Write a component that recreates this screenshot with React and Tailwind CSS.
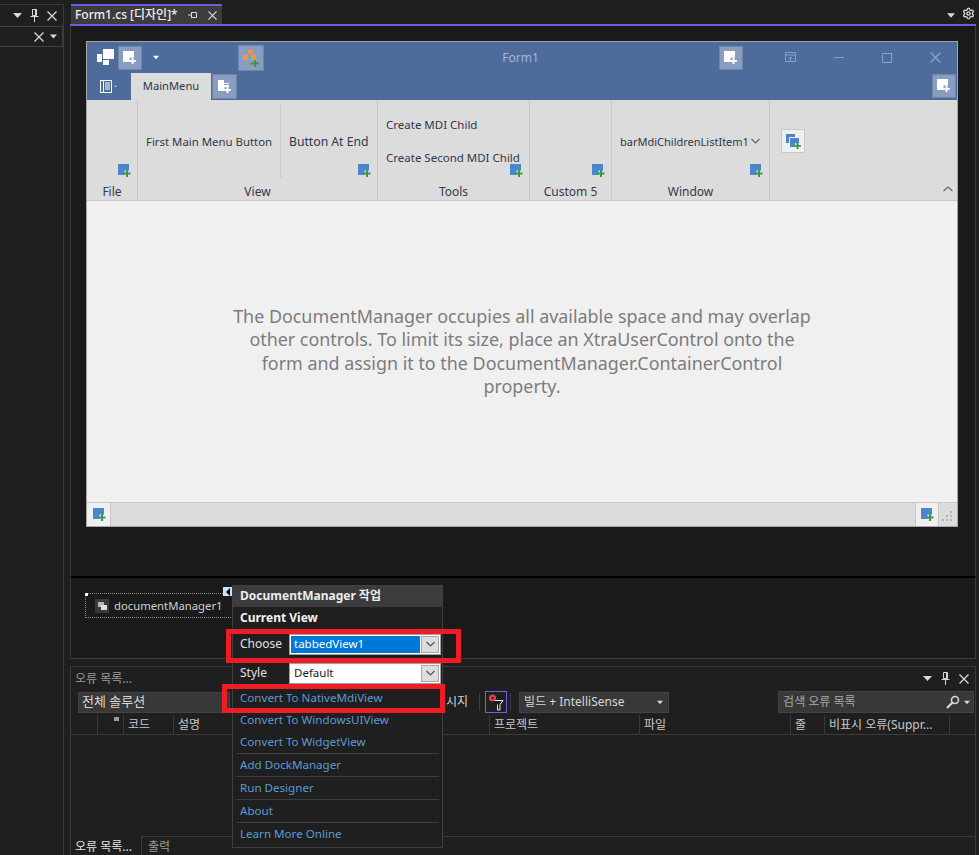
import React from "react";
import { Settings } from "lucide-react";

const ui = { fontFamily: '"Noto Sans", "Noto Sans CJK KR", sans-serif' };

function Arrow({ className = "" }) {
  return (
    <svg width="9" height="5" viewBox="0 0 9 5" className={className}>
      <path d="M0 0h9L4.500 5z" fill="currentColor" />
    </svg>
  );
}

function Pin({ className = "" }) {
  return (
    <svg width="9" height="13" viewBox="0 0 9 13" className={className} fill="none" stroke="currentColor">
      <path d="M2.500.500h4v6h-4zM.500 7.500h8M4.500 7.500V13M5.500 1v5" />
    </svg>
  );
}

function Close({ size = 10, className = "" }) {
  return (
    <svg width={size} height={size} viewBox="0 0 10 10" className={className} fill="none" stroke="currentColor" strokeWidth="1.300">
      <path d="M.500.500l9 9M9.500.500l-9 9" />
    </svg>
  );
}

function AddBlue() {
  return (
    <svg width="13" height="13" viewBox="0 0 13 13" className="block">
      <path d="M0 0h11v6.500H6.500V11H0z" fill="#4a86c8" />
      <path d="M8 6h2v2.500h2.500v2H10V13H8v-2.500H5.500v-2H8z" fill="#339a4c" />
    </svg>
  );
}

function AddWhiteButton({ size = 24, tabs = false }) {
  return (
    <div
      className="flex items-center justify-center bg-[#8a9dc0] border border-[#7186ad]"
      style={{ width: size, height: size }}
    >
      <svg width="14" height="14" viewBox="0 0 14 14">
        {tabs ? (
          <path d="M0 0h6v3h5v1H6v1h5v2H6.500v4H0z" fill="#fff" />
        ) : (
          <path d="M0 0h11v6.500H6.500V11H0z" fill="#fff" />
        )}
        <path d="M8.500 6.500h2V9H13v1.800h-2.500V13h-2v-2.200H6V9h2.500z" fill="#fff" />
      </svg>
    </div>
  );
}

function GroupLabel({ children }) {
  return <div className="h-[19px] pt-[2px] text-center leading-[18px] text-[#333a48]">{children}</div>;
}

function Chevron({ dark = false }) {
  return (
    <svg width="9" height="6" viewBox="0 0 9 6" fill="none" stroke={dark ? "#555" : "#666"} strokeWidth="1.200">
      <path d="M.500 1l4 4 4-4" />
    </svg>
  );
}

function Ribbon() {
  return (
    <div className="flex h-[101px] bg-[#dcdcdc] border-b border-[#c8c8c8] text-[12px] text-[#30384a]">
      <div className="w-[51px] flex flex-col border-r border-[#c8c8c8]">
        <div className="h-[81px] flex items-end justify-end pr-[6px] pb-[4px]">
          <AddBlue />
        </div>
        <GroupLabel>File</GroupLabel>
      </div>

      <div className="w-[240px] flex flex-col border-r border-[#c8c8c8]">
        <div className="h-[81px] flex pt-[4px]">
          <div className="w-[143px] h-[74px] flex items-center pl-[8px] pt-[1px] border-r border-[#c8c8c8] whitespace-nowrap text-[11.400px]">
            First Main Menu Button
          </div>
          <div className="flex-1 relative pl-[8px] pt-[28px] whitespace-nowrap leading-[20px] text-[12.200px]">
            Button At End
            <div className="absolute right-[6px] bottom-[4px]">
              <AddBlue />
            </div>
          </div>
        </div>
        <GroupLabel>View</GroupLabel>
      </div>

      <div className="w-[152px] flex flex-col border-r border-[#c8c8c8]">
        <div className="h-[81px] relative pl-[8px] pt-[15px] leading-[20px] whitespace-nowrap text-[11.500px]">
          <div className="mb-[13px]">Create MDI Child</div>
          <div>Create Second MDI Child</div>
          <div className="absolute right-[6px] bottom-[4px]">
            <AddBlue />
          </div>
        </div>
        <GroupLabel>Tools</GroupLabel>
      </div>

      <div className="w-[82px] flex flex-col border-r border-[#c8c8c8]">
        <div className="h-[81px] flex items-end justify-end pr-[6px] pb-[4px]">
          <AddBlue />
        </div>
        <GroupLabel>Custom 5</GroupLabel>
      </div>

      <div className="w-[158px] flex flex-col border-r border-[#c8c8c8]">
        <div className="h-[81px] relative pl-[8px] pt-[32px] leading-[20px] whitespace-nowrap flex items-start gap-[3px] text-[11px]">
          <span className="w-[128px]">barMdiChildrenListItem1</span>
          <div className="pt-[6px]">
            <Chevron />
          </div>
          <div className="absolute right-[6px] bottom-[4px]">
            <AddBlue />
          </div>
        </div>
        <GroupLabel>Window</GroupLabel>
      </div>

      <div className="flex-1 relative pl-[11px] pt-[29px]">
        <div className="w-[24px] h-[24px] bg-[#efefef] border border-[#c8c8c8] flex items-center justify-center">
          <svg width="15" height="15" viewBox="0 0 15 15">
            <path d="M0 0h9v3H3v6H0z" fill="#4a86c8" />
            <path d="M4 4h9v5H9v4H4z" fill="#4a86c8" />
            <path d="M10.500 8.500h2V11H15v1.800h-2.500V15h-2v-2.200H8V11h2.500z" fill="#339a4c" />
          </svg>
        </div>
        <svg width="10" height="6" viewBox="0 0 10 6" fill="none" stroke="#666" strokeWidth="1.200" className="absolute right-[4px] bottom-[8px]">
          <path d="M.500 5L5 1l4.500 4" />
        </svg>
      </div>
    </div>
  );
}

function TitleBar() {
  return (
    <div className="h-[58px] bg-[#4e6c9b] flex flex-col text-[12px]">
      <div className="h-[31px] flex items-center">
        <svg width="17" height="17" viewBox="0 0 17 17" className="ml-[10px] mr-[4px]">
          <path d="M6 0h11v10H6zM0 5h5v8H0zM6 11h6v5H6z" fill="#fff" />
        </svg>
        <AddWhiteButton />
        <Arrow className="ml-[11px] w-[6px] text-white" />
        <div className="ml-[79px] w-[26px] h-[26px] bg-[#8a9dc0] border border-[#7186ad] flex items-center justify-center">
          <svg width="18" height="18" viewBox="0 0 18 18">
            <path d="M6 1h5v4H6zM1 6h5v5H1zM9 6h5v5H9z" fill="#ee9a3c" />
            <path d="M12 11h2v2.500h3v2h-3V18h-2v-2.500H9v-2h3z" fill="#339a4c" />
          </svg>
        </div>
        <div className="flex-1 text-center pl-[58px] text-[#a4b6d6]">Form1</div>
        <AddWhiteButton />
        <div className="w-[214px] shrink-0 pl-[24px] flex items-center text-[#8ba0c6]">
          <div className="w-[48px] shrink-0 flex justify-center">
            <svg width="12" height="11" viewBox="0 0 12 11" fill="none" stroke="currentColor">
              <path d="M.500.500h10v9H.500zM.500 3h10M5.500 9V5M3.500 7l2-2 2 2" />
            </svg>
          </div>
          <div className="w-[48px] shrink-0 flex justify-center">
            <div className="w-[10px] h-[1px] bg-current" />
          </div>
          <div className="w-[48px] shrink-0 flex justify-center">
            <div className="w-[10px] h-[10px] border border-current" />
          </div>
          <div className="w-[48px] shrink-0 flex justify-center">
            <Close size={11} />
          </div>
        </div>
      </div>
      <div className="h-[27px] flex items-end">
        <div className="w-[44px] h-[27px] pl-[13px] flex items-center gap-[2px] text-white">
          <svg width="12" height="13" viewBox="0 0 12 13" fill="none" stroke="currentColor">
            <path d="M.500.500h11v12H.500zM3.500.500v12M5 3h5M5 5h5M5 7h5M5 9h5" />
          </svg>
          <Arrow className="w-[3px] text-[#d0d8e8]" />
        </div>
        <div className="w-[80px] h-[27px] bg-[#dcdcdc] text-[#2f3644] flex items-center justify-center text-[11.200px]">MainMenu</div>
        <div className="ml-[1px] mb-[1px]">
          <AddWhiteButton size={25} tabs />
        </div>
        <div className="flex-1" />
        <div className="mr-[1px] mb-[2px]">
          <AddWhiteButton />
        </div>
      </div>
    </div>
  );
}

function FormDesigner() {
  return (
    <div className="ml-[15px] mt-[15px] w-[872px] h-[486px] border border-[#a6a6a6] flex flex-col">
      <TitleBar />
      <Ribbon />
      <div className="flex-1 bg-[#f0f0f0] flex items-center justify-center">
        <p className="w-[584px] text-center text-[17.900px] leading-[23.300px] text-[#7c7c7c]">
          The DocumentManager occupies all available space and may overlap other controls. To limit its size, place an XtraUserControl onto the form and assign it to the DocumentManager.ContainerControl property.
        </p>
      </div>
      <div className="h-[24px] bg-[#dcdcdc] border-t border-[#c8c8c8] flex items-center justify-between">
        <div className="w-[24px] h-[23px] bg-[#efefef] border-r border-[#c8c8c8] flex items-center justify-center pl-[2px]">
          <AddBlue />
        </div>
        <div className="flex items-center">
          <div className="w-[24px] h-[23px] bg-[#efefef] border-x border-[#c8c8c8] flex items-center justify-center">
            <AddBlue />
          </div>
          <svg width="12" height="12" viewBox="0 0 12 12" className="mx-[3px]">
            <path d="M8 2h2v2H8zM4 6h2v2H4zM8 6h2v2H8zM0 10h2v2H0zM4 10h2v2H4zM8 10h2v2H8z" fill="#b5b5b5" />
          </svg>
        </div>
      </div>
    </div>
  );
}

function ErrorList() {
  const cols = [
    { w: 27, label: "" },
    { w: 26, label: "" },
    { w: 50, label: "코드" },
    { w: 316, label: "설명" },
    { w: 150, label: "프로젝트" },
    { w: 151, label: "파일" },
    { w: 34, label: "줄" },
    { w: 125, label: "비표시 오류(Suppr..." },
  ];
  return (
    <div className="mt-[7px] h-[189px] border-t border-l border-r border-[#3a3a3a] flex flex-col text-[12px] text-[#d6d6d6]">
      <div className="h-[23px] flex items-center justify-between pl-[4px] pr-[6px] text-[#9a9a9a]">
        <span>오류 목록...</span>
        <div className="flex items-center gap-[9px] text-[#d8d8d8]">
          <Arrow />
          <Pin />
          <Close />
        </div>
      </div>
      <div className="h-[24px] flex items-center pl-[7px] relative">
        <div className="w-[152px] h-[21px] bg-[#383838] border border-[#434343] flex items-center pl-[3px] text-[13px]">전체 솔루션</div>
        <span className="ml-[216px]">시지</span>
        <div className="ml-[11px] w-px h-[18px] bg-[#3f3f3f]" />
        <div className="ml-[5px] w-[22px] h-[22px] border border-[#7160e8] flex items-center justify-center">
          <svg width="18" height="18" viewBox="0 0 18 18" fill="none">
            <circle cx="5.500" cy="5" r="3.500" fill="#e8404c" />
            <circle cx="5.500" cy="5" r="1.200" fill="#222" />
            <path d="M8 7.500h8l-3 4v5.500h-2.500v-5.500" stroke="#e8e8e8" />
          </svg>
        </div>
        <div className="ml-[3px] w-px h-[18px] bg-[#3f3f3f]" />
        <div className="ml-[8px] w-[150px] h-[21px] bg-[#383838] border border-[#434343] flex items-center justify-between pl-[4px] pr-[5px]">
          <span>빌드 + IntelliSense</span>
          <Arrow className="w-[6px]" />
        </div>
        <div className="ml-[109px] w-[196px] h-[22px] bg-[#383838] border border-[#434343] flex items-center justify-between pl-[4px] pr-[3px]">
          <span className="text-[#a8a8a8]">검색 오류 목록</span>
          <div className="flex items-center gap-[4px] text-[#d8d8d8]">
            <svg width="14" height="14" viewBox="0 0 14 14" fill="none" stroke="currentColor" strokeWidth="1.600">
              <circle cx="9" cy="5" r="3.500" />
              <path d="M6.500 7.500L1 13" strokeWidth="2.200" />
            </svg>
            <Arrow className="w-[6px]" />
          </div>
        </div>
      </div>
      <div className="mt-[1px] h-[20px] flex border-b border-[#3a3a3a] text-[#c8c8c8]">
        {cols.map((c, i) => (
          <div key={i} className="h-full border-r border-[#3a3a3a] pl-[4px] leading-[20px] whitespace-nowrap overflow-hidden relative" style={{ width: c.w }}>
            {c.label}
            {i === 1 ? <div className="absolute right-[4px] top-[2px] w-[5px] h-[4px] bg-[#9a9a9a]" /> : null}
          </div>
        ))}
      </div>
      <div className="flex-1" />
      <div className="h-[19px] flex">
        <div className="w-[71px] pl-[4px] text-[#e4e4e4] leading-[21px] border-r border-[#3a3a3a]">오류 목록...</div>
        <div className="flex-1 border-t border-[#3a3a3a] pl-[6px] text-[#9a9a9a] leading-[20px]">출력</div>
      </div>
    </div>
  );
}

function DropField({ top, children, selected = false }) {
  return (
    <div className={`flex items-center h-[20px] ${top}`}>
      <span className="w-[56px] shrink-0 pl-[7px] text-[#e0e0e0]">{children[0]}</span>
      <div className="w-[152px] shrink-0 h-[21px] bg-white border border-[#a0a0a0] flex items-center p-[1px] text-[#1a1a1a] text-[11.500px]">
        <div className={`flex-1 h-full pl-[3px] leading-[15px] ${selected ? "bg-[#0078d7] text-white" : ""}`}>{children[1]}</div>
        <div className="w-[18px] h-full ml-[1px] bg-[#dddddd] border border-[#a8a8a8] flex items-center justify-center">
          <Chevron dark />
        </div>
      </div>
    </div>
  );
}

function ActionPanel() {
  const link = "pl-[7px] h-[22px] leading-[22px] text-[#5b9bd5] text-[11.600px]";
  const sep = "mx-[3px] border-t border-[#3f3f3f]";
  return (
    <div className="absolute left-[232px] top-[585px] w-[211px] h-[263px] bg-[#1f1f1f] border border-[#3f3f3f] text-[12px]">
      <div className="h-[21px] bg-[#3c3c3c] pl-[7px] leading-[20px] font-bold text-[#ececec]">DocumentManager 작업</div>
      <div className="h-[22px] pl-[7px] leading-[22px] font-bold text-[#f2f2f2]">Current View</div>
      <DropField top="mt-[5px]" selected>{["Choose", "tabbedView1"]}</DropField>
      <DropField top="mt-[9px]">{["Style", "Default"]}</DropField>
      <div className="mt-[4px]">
        <div className={link}>Convert To NativeMdiView</div>
        <div className={link}>Convert To WindowsUIView</div>
        <div className={link}>Convert To WidgetView</div>
        <div className={sep} />
        <div className={link}>Add DockManager</div>
        <div className={sep} />
        <div className={link}>Run Designer</div>
        <div className={sep} />
        <div className={link}>About</div>
        <div className={sep} />
        <div className={link}>Learn More Online</div>
      </div>
      <div className="absolute left-[-10px] top-[1px] w-[9px] h-[9px] bg-[#cfe3f5] flex items-center justify-center">
        <div className="w-0 h-0 border-y-[4px] border-y-transparent border-r-[4px] border-r-black" />
      </div>
    </div>
  );
}

export default function App() {
  return (
    <div className="relative w-[979px] h-[855px] overflow-hidden bg-[#1f1f1f] flex" style={ui}>
      {/* left tool window */}
      <div className="w-[64px] mt-[4px] border-t border-r border-[#3a3a3a] text-[#d8d8d8]">
        <div className="h-[21px] flex items-center justify-end gap-[8px] pr-[6px]">
          <Arrow />
          <Pin />
          <Close />
        </div>
        <div className="h-[21px] border-y border-r border-[#3f3f3f] flex items-center justify-end gap-[6px] pr-[5px]">
          <Close />
          <Arrow className="w-[7px]" />
        </div>
      </div>

      <div className="ml-[6px] w-[906px] flex flex-col">
        {/* document tabs */}
        <div className="h-[26px] pt-[4px] flex items-start border-b-2 border-[#6b5ce0] box-border relative">
          <div className="ml-[1px] w-[151px] h-[20px] bg-[#3c3c3c] border-t-2 border-[#6b5ce0] flex items-center pl-[4px] text-[12px] font-medium text-[#f0f0f0]">
            <span className="w-[113px]">Form1.cs [디자인]*</span>
            <svg width="9" height="8" viewBox="0 0 9 8" fill="none" stroke="#d8d8d8" className="mr-[11px]">
              <path d="M0 4h3M3.500 1v6M3.500 1.500h5v5h-5" />
            </svg>
            <Close size={9} className="text-[#d8d8d8]" />
          </div>
          <div className="ml-auto flex items-center gap-[7px] mr-[1px] mt-[3px] text-[#d8d8d8]">
            <Arrow className="w-[8px] mt-[3px]" />
            <Settings size={13} strokeWidth={2.500} />
          </div>
        </div>

        {/* designer surface */}
        <div className="h-[550px] bg-[#1a1a1a] border-l border-r border-[#3a3a3a] w-[906px] flex flex-col">
          <FormDesigner />
        </div>

        {/* component tray */}
        <div className="h-[83px] bg-[#1a1a1a] border-t-2 border-black border-b border-l border-r border-b-[#3a3a3a] border-x-[#3a3a3a] pl-[14px] pt-[15px]">
          <div className="relative w-[148px] h-[25px] border border-dotted border-[#8a8a8a] flex items-center pl-[9px] gap-[5px] text-[11.300px] text-[#cfcfcf]">
            <div className="absolute left-[-1px] top-[-1px] w-[3px] h-[3px] bg-white" />
            <div className="w-[14px] h-[14px] bg-[#3a3a3a] flex items-center justify-center">
              <svg width="9" height="8" viewBox="0 0 9 8">
                <path d="M0 0h6v5H0z" fill="#b8b8b8" />
                <path d="M3 3h6v5H3z" fill="#e0e0e0" />
              </svg>
            </div>
            <span className="pt-[2px]">documentManager1</span>
          </div>
        </div>

        <ErrorList />
      </div>

      <ActionPanel />

      {/* red annotations over the screenshot */}
      <div className="absolute left-[226px] top-[629px] w-[235px] h-[34px] border-[5px] border-[#ee1c25]" />
      <div className="absolute left-[222px] top-[684px] w-[223px] h-[29px] border-[5px] border-[#ee1c25]" />
    </div>
  );
}
